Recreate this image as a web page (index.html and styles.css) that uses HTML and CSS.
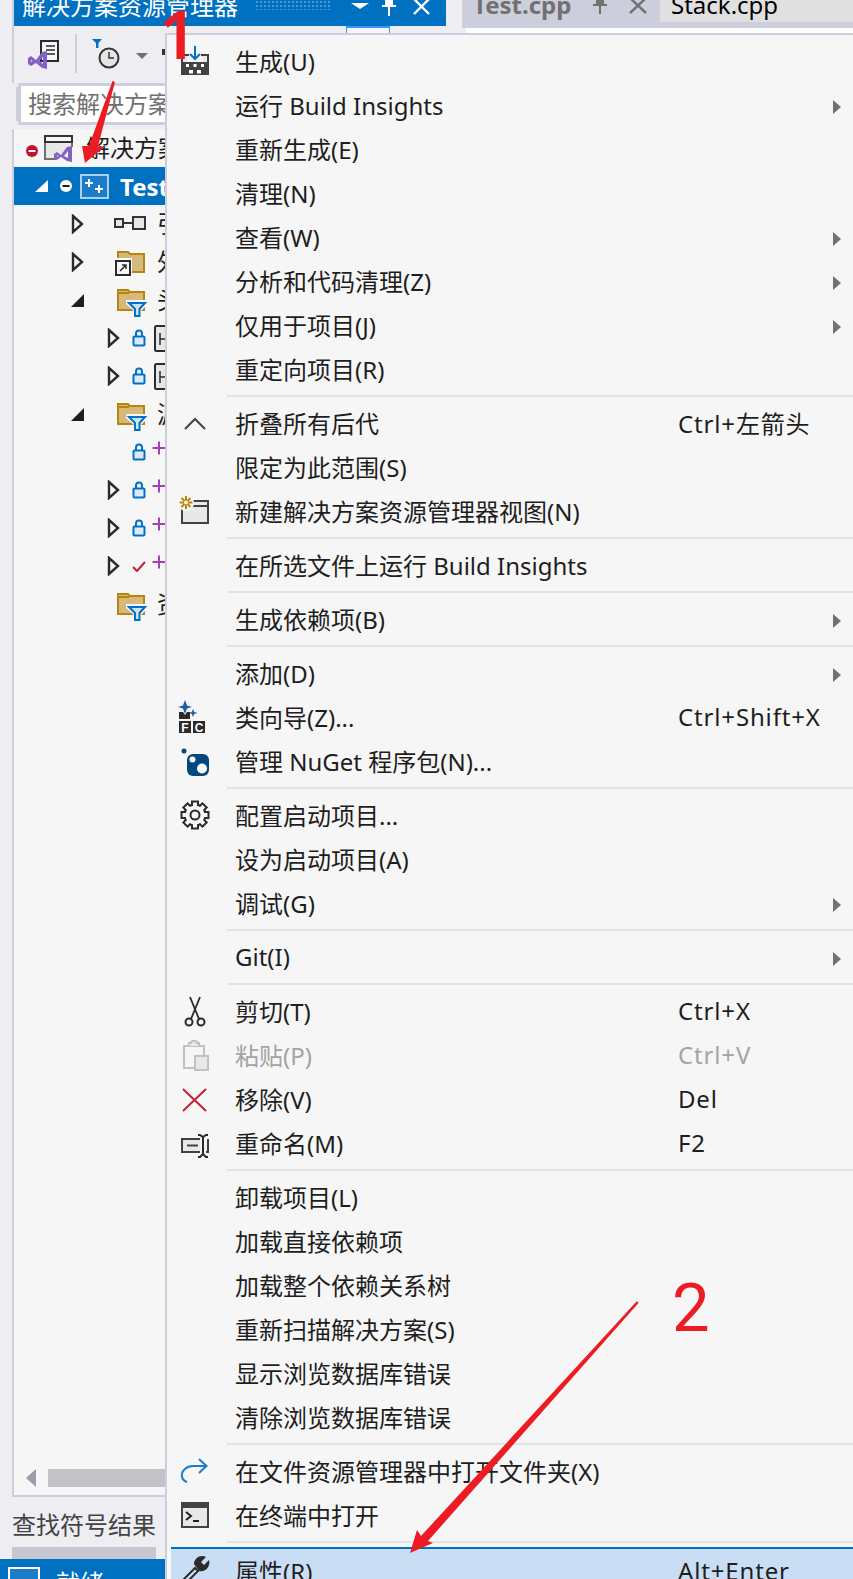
FILE: index.html
```html
<!DOCTYPE html>
<html lang="zh-CN">
<head>
<meta charset="utf-8">
<title>解决方案资源管理器</title>
<link rel="stylesheet" href="styles.css">
</head>
<body>
<svg class="defs" width="0" height="0" aria-hidden="true">
  <defs>
    <symbol id="a-open" viewBox="0 0 14 20"><path d="M2 2 L11 10 L2 18 Z" fill="none" stroke="#2b2b2b" stroke-width="2.4"/></symbol>
    <symbol id="a-full" viewBox="0 0 14 20"><path d="M13 4 V17 H0 Z" fill="#1e1e1e"/></symbol>
    <symbol id="lock" viewBox="0 0 14 18"><rect x="1.5" y="7.5" width="11" height="9" rx="1" fill="#dce9f6" stroke="#0072c6" stroke-width="2"/><path d="M4 7 V4.5 C4 0.5 10 0.5 10 4.5 V7" fill="none" stroke="#0072c6" stroke-width="2"/></symbol>
    <symbol id="ffilter" viewBox="0 0 34 36" overflow="visible"><path d="M4 8 H14 L16 10 H30 V28 H4 Z" fill="#d6b97c" stroke="#b8860b" stroke-width="2"/><path d="M4 11 H15" stroke="#b8860b" stroke-width="2"/><path d="M12 18 H34 V22 L27 29 V37 H20 V29 L12 22 Z" fill="#f6f6f6"/><path d="M15 21 H31 L25.500 27 V34 H21 V27 Z" fill="#cfe3f5" stroke="#0072c6" stroke-width="2"/></symbol>
    <symbol id="plus" viewBox="0 0 28 36"><path d="M9 7.500 V20.500 M2.500 14 H15.500" stroke="#a43fb5" stroke-width="2" fill="none"/></symbol>
    <symbol id="hfile" viewBox="0 0 28 36"><rect x="5" y="6" width="22" height="25" rx="1.500" fill="#e6e6e6" stroke="#2b2b2b" stroke-width="2"/><path d="M10 13 V25 M10 19 H16 M16 15 V23" stroke="#2b2b2b" stroke-width="1.500" fill="none"/></symbol>
  </defs>
</svg>

<div class="page">
  <div class="main">
    <section class="explorer">
      <header class="title">
        <span class="title-text">解决方案资源管理器</span>
        <span class="grip"></span>
        <svg class="t-drop" width="18" height="6" viewBox="0 0 18 6"><path d="M0 0 H18 L9 6 Z" fill="#fff"/></svg>
        <svg class="t-pin" width="14" height="16" viewBox="0 0 14 16"><path d="M3 0 H11 V5 H14 V7 H8 V16 H6 V7 H0 V5 H3 Z" fill="#fff"/></svg>
        <svg class="t-x" width="17" height="15" viewBox="0 0 17 15"><path d="M1 -1 L16 14 M16 -1 L1 14" stroke="#fff" stroke-width="2.400"/></svg>
      </header>
      <div class="toolbar">
        <svg class="tb-doc" width="32" height="32" viewBox="0 0 32 32"><rect x="13" y="2" width="17" height="20" fill="#f6f6f6" stroke="#2b2b2b" stroke-width="2"/><path d="M18 7 H27 M18 11 H27 M18 15 H27" stroke="#2b2b2b" stroke-width="1.500"/><path d="M0 19 L3 17 L8 21 L14 13 L19 12 V30 L14 29 L8 24 L3 27 L0 25 Z M3 21 V23 L4.500 22 Z M15 18 L11.500 22 L15 25 Z" fill="#8661c5" fill-rule="evenodd"/></svg>
        <span class="tb-sep"></span>
        <svg class="tb-clock" width="28" height="30" viewBox="0 0 28 30"><circle cx="17" cy="19" r="9.500" fill="#e4e4e4" stroke="#333" stroke-width="2"/><path d="M17 13 V19 H22" fill="none" stroke="#333" stroke-width="1.500"/><path d="M0 0 H10 L6.500 4 V9 H4 V4 Z" fill="#0072c6"/></svg>
        <span class="tb-caret"></span>
        <span class="tb-bit"></span>
        <span class="tb-hot"></span>
      </div>
      <div class="search">搜索解决方案资源管理器(Ctrl+;)</div>
      <div class="tree-wrap">
        <ul class="tree">
          <li class="row lv0">
            <span class="state"><svg width="12" height="12" viewBox="0 0 12 12"><circle cx="6" cy="6" r="6" fill="#c50f2e"/><rect x="2.500" y="5" width="7" height="2" fill="#fff"/></svg></span>
            <span class="icon"><svg width="30" height="30" viewBox="0 0 30 30"><path d="M12 26 H1 V3 H28 V14" fill="#e8e8e8" stroke="#717171" stroke-width="2"/><path d="M1 3 H28 V9 H1 Z" fill="#f6f6f6" stroke="#333" stroke-width="2"/><path d="M10 21 L13 19 L17 22 L23 14 L28 13 V29 L23 28 L17 24 L13 27 L10 25 Z M13 22 V24 L14.500 23 Z M24 18 L20 23 L24 25 Z" fill="#8661c5" fill-rule="evenodd"/></svg></span>
            <span class="label">解决方案'Test'</span>
          </li>
          <li class="row lv1 selected">
            <span class="exp"><svg width="14" height="14" viewBox="0 0 14 14"><path d="M13 1 V13 H0 Z" fill="#fff"/></svg></span>
            <span class="state"><svg width="12" height="12" viewBox="0 0 12 12"><circle cx="6" cy="6" r="6" fill="#fff"/><rect x="2.500" y="5" width="7" height="2" fill="#1e1e1e"/></svg></span>
            <span class="icon"><svg width="29" height="25" viewBox="0 0 29 25"><rect x="1" y="1" width="27" height="23" fill="#1c7cc8" stroke="#a9d2f0" stroke-width="2"/><path d="M9 5 V13 M5 9 H13 M19 11 V19 M15 15 H23" stroke="#fff" stroke-width="2"/></svg></span>
            <span class="label strong">Test</span>
          </li>
          <li class="row lv2">
            <span class="exp"><svg width="14" height="20"><use href="#a-open"/></svg></span>
            <span class="state"></span>
            <span class="icon"><svg width="34" height="16" viewBox="0 0 34 16"><rect x="1" y="3" width="8" height="8" fill="#e6e6e6" stroke="#333" stroke-width="2"/><path d="M9 7 H19" stroke="#333" stroke-width="2"/><rect x="19" y="1" width="12" height="12" fill="#e6e6e6" stroke="#333" stroke-width="2"/></svg></span>
            <span class="label">引用</span>
          </li>
          <li class="row lv2">
            <span class="exp"><svg width="14" height="20"><use href="#a-open"/></svg></span>
            <span class="state"></span>
            <span class="icon"><svg width="34" height="36" viewBox="0 0 34 36"><path d="M4 8 H14 L16 10 H30 V28 H4 Z" fill="#d6b97c" stroke="#b8860b" stroke-width="2"/><rect x="0" y="14" width="18" height="20" fill="#fff"/><rect x="2" y="17" width="14" height="14" fill="#f6f6f6" stroke="#2b2b2b" stroke-width="2"/><path d="M6 27 L12 21 M8 21 H12 V25" fill="none" stroke="#2b2b2b" stroke-width="1.500"/></svg></span>
            <span class="label">外部依赖项</span>
          </li>
          <li class="row lv2">
            <span class="exp"><svg width="14" height="20"><use href="#a-full"/></svg></span>
            <span class="state"></span>
            <span class="icon"><svg width="34" height="36"><use href="#ffilter"/></svg></span>
            <span class="label">头文件</span>
          </li>
          <li class="row lv3">
            <span class="exp"><svg width="14" height="20"><use href="#a-open"/></svg></span>
            <span class="state"><svg width="14" height="18"><use href="#lock"/></svg></span>
            <span class="icon"><svg width="28" height="36"><use href="#hfile"/></svg></span>
            <span class="label"></span>
          </li>
          <li class="row lv3">
            <span class="exp"><svg width="14" height="20"><use href="#a-open"/></svg></span>
            <span class="state"><svg width="14" height="18"><use href="#lock"/></svg></span>
            <span class="icon"><svg width="28" height="36"><use href="#hfile"/></svg></span>
            <span class="label"></span>
          </li>
          <li class="row lv2">
            <span class="exp"><svg width="14" height="20"><use href="#a-full"/></svg></span>
            <span class="state"></span>
            <span class="icon"><svg width="34" height="36"><use href="#ffilter"/></svg></span>
            <span class="label">源文件</span>
          </li>
          <li class="row lv3">
            <span class="exp"></span>
            <span class="state"><svg width="14" height="18"><use href="#lock"/></svg></span>
            <span class="icon"><svg width="28" height="36"><use href="#plus"/></svg></span>
            <span class="label"></span>
          </li>
          <li class="row lv3">
            <span class="exp"><svg width="14" height="20"><use href="#a-open"/></svg></span>
            <span class="state"><svg width="14" height="18"><use href="#lock"/></svg></span>
            <span class="icon"><svg width="28" height="36"><use href="#plus"/></svg></span>
            <span class="label"></span>
          </li>
          <li class="row lv3">
            <span class="exp"><svg width="14" height="20"><use href="#a-open"/></svg></span>
            <span class="state"><svg width="14" height="18"><use href="#lock"/></svg></span>
            <span class="icon"><svg width="28" height="36"><use href="#plus"/></svg></span>
            <span class="label"></span>
          </li>
          <li class="row lv3">
            <span class="exp"><svg width="14" height="20"><use href="#a-open"/></svg></span>
            <span class="state"><svg width="14" height="12" viewBox="0 0 14 12"><path d="M1 7 L5 11 L13 2" fill="none" stroke="#c5203a" stroke-width="2"/></svg></span>
            <span class="icon"><svg width="28" height="36"><use href="#plus"/></svg></span>
            <span class="label"></span>
          </li>
          <li class="row lv2">
            <span class="exp"></span>
            <span class="state"></span>
            <span class="icon"><svg width="34" height="36"><use href="#ffilter"/></svg></span>
            <span class="label">资源文件</span>
          </li>
        </ul>
        <div class="hscroll">
          <span class="hs-left"></span>
          <span class="hs-thumb"></span>
        </div>
      </div>
      <div class="bottom-tab">查找符号结果</div>
      <div class="tab-strip"></div>
    </section>
    <section class="docs">
      <div class="tabs">
        <div class="tab active-off">
          <span class="tab-name bold">Test.cpp</span>
          <svg class="tab-pin" width="14" height="14" viewBox="0 0 14 14"><path d="M3 -2 H11 V4 H14 V6 H8 V14 H6 V6 H0 V4 H3 Z" fill="#717171"/></svg>
          <svg class="tab-x" width="18" height="14" viewBox="0 0 18 14"><path d="M1 -2 L17 13 M17 -2 L1 13" stroke="#717171" stroke-width="2.400"/></svg>
        </div>
        <div class="tab active"><span class="tab-name">Stack.cpp</span></div>
      </div>
      <div class="tabline"></div>
    </section>
  </div>
  <footer class="status">
    <span class="st-box"></span>
    <span class="st-text">就绪</span>
  </footer>

  <nav class="menu">
    <div class="mi"><span class="mi-ic"><svg width="32" height="36" viewBox="0 0 32 36"><path d="M3 28 V10 H10 M29 28 V10 H22" fill="#e8e8e8" stroke="#424242" stroke-width="2"/><rect x="2" y="17" width="28" height="13" fill="#424242"/><path d="M7 19 h3 v3 h-3 z M14.500 19 h3 v3 h-3 z M22 19 h3 v3 h-3 z M10 25 h4 v3.500 h-4 z M18 25 h4 v3.500 h-4 z" fill="#fff"/><path d="M16 1 V14 M11 9 L16 14 L21 9" fill="none" stroke="#0072c6" stroke-width="2"/></svg></span><span class="mi-t">生成(U)</span></div>
    <div class="mi"><span class="mi-ic"></span><span class="mi-t">运行 Build Insights</span><span class="mi-k"></span><span class="sub"></span></div>
    <div class="mi"><span class="mi-ic"></span><span class="mi-t">重新生成(E)</span></div>
    <div class="mi"><span class="mi-ic"></span><span class="mi-t">清理(N)</span></div>
    <div class="mi"><span class="mi-ic"></span><span class="mi-t">查看(W)</span><span class="mi-k"></span><span class="sub"></span></div>
    <div class="mi"><span class="mi-ic"></span><span class="mi-t">分析和代码清理(Z)</span><span class="mi-k"></span><span class="sub"></span></div>
    <div class="mi"><span class="mi-ic"></span><span class="mi-t">仅用于项目(J)</span><span class="mi-k"></span><span class="sub"></span></div>
    <div class="mi"><span class="mi-ic"></span><span class="mi-t">重定向项目(R)</span></div>
    <div class="sep"></div>
    <div class="mi"><span class="mi-ic"><svg width="32" height="36" viewBox="0 0 32 36"><path d="M6 22 L16 12 L26 22" fill="none" stroke="#424242" stroke-width="2"/></svg></span><span class="mi-t">折叠所有后代</span><span class="mi-k">Ctrl+左箭头</span></div>
    <div class="mi"><span class="mi-ic"></span><span class="mi-t">限定为此范围(S)</span></div>
    <div class="mi"><span class="mi-ic"><svg width="32" height="36" viewBox="0 0 32 36"><rect x="3" y="6" width="26" height="22" fill="#e8e8e8" stroke="#424242" stroke-width="2"/><path d="M3 11 H29" stroke="#424242" stroke-width="2"/><circle cx="7" cy="8" r="8" fill="#f6f6f6"/><path d="M7 1 V14 M0.500 7.500 H13.500 M2.500 3 L11.500 12 M11.500 3 L2.500 12" stroke="#b8860b" stroke-width="2"/><circle cx="7" cy="7.500" r="2" fill="#f6f6f6"/></svg></span><span class="mi-t">新建解决方案资源管理器视图(N)</span></div>
    <div class="sep"></div>
    <div class="mi"><span class="mi-ic"></span><span class="mi-t">在所选文件上运行 Build Insights</span></div>
    <div class="sep"></div>
    <div class="mi"><span class="mi-ic"></span><span class="mi-t">生成依赖项(B)</span><span class="mi-k"></span><span class="sub"></span></div>
    <div class="sep"></div>
    <div class="mi"><span class="mi-ic"></span><span class="mi-t">添加(D)</span><span class="mi-k"></span><span class="sub"></span></div>
    <div class="mi"><span class="mi-ic"><svg width="32" height="36" viewBox="0 0 32 36"><path d="M6 -1 L8 4.500 L13 6 L8 7.500 L6 13 L4 7.500 L-1 6 L4 4.500 Z M14 8 L15.200 11 L18.500 12 L15.200 13 L14 16 L12.800 13 L9.500 12 L12.800 11 Z" fill="#1e5fa8"/><path d="M0 11 H4 L6 14 L8 11 H11 V18 H0 Z" fill="#2b2b2b"/><rect x="0" y="20" width="12" height="12" fill="#2b2b2b"/><rect x="14" y="20" width="12" height="12" fill="#2b2b2b"/><text x="6" y="30.500" class="ic-letter">F</text><text x="20" y="30.500" class="ic-letter">C</text></svg></span><span class="mi-t">类向导(Z)...</span><span class="mi-k">Ctrl+Shift+X</span></div>
    <div class="mi"><span class="mi-ic"><svg width="32" height="36" viewBox="0 0 32 36"><circle cx="5" cy="6" r="2.500" fill="#004880"/><rect x="8" y="9" width="22" height="22" rx="6" fill="#004880"/><circle cx="13.500" cy="14.500" r="3" fill="#fff"/><circle cx="23" cy="23.500" r="5" fill="#fff"/></svg></span><span class="mi-t">管理 NuGet 程序包(N)...</span></div>
    <div class="sep"></div>
    <div class="mi"><span class="mi-ic"><svg width="32" height="36" viewBox="0 0 32 36"><g transform="translate(16 16)"><circle r="10.500" fill="#f6f6f6" stroke="#2b2b2b" stroke-width="2"/><g fill="#f6f6f6" stroke="#2b2b2b" stroke-width="2"><rect x="-3" y="-13.500" width="6" height="6"/><rect x="-3" y="-13.500" width="6" height="6" transform="rotate(45)"/><rect x="-3" y="-13.500" width="6" height="6" transform="rotate(90)"/><rect x="-3" y="-13.500" width="6" height="6" transform="rotate(135)"/><rect x="-3" y="-13.500" width="6" height="6" transform="rotate(180)"/><rect x="-3" y="-13.500" width="6" height="6" transform="rotate(225)"/><rect x="-3" y="-13.500" width="6" height="6" transform="rotate(270)"/><rect x="-3" y="-13.500" width="6" height="6" transform="rotate(315)"/></g><circle r="9.500" fill="#f6f6f6"/><circle r="4.500" fill="none" stroke="#2b2b2b" stroke-width="2"/></g></svg></span><span class="mi-t">配置启动项目...</span></div>
    <div class="mi"><span class="mi-ic"></span><span class="mi-t">设为启动项目(A)</span></div>
    <div class="mi"><span class="mi-ic"></span><span class="mi-t">调试(G)</span><span class="mi-k"></span><span class="sub"></span></div>
    <div class="sep"></div>
    <div class="mi"><span class="mi-ic"></span><span class="mi-t">Git(I)</span><span class="mi-k"></span><span class="sub"></span></div>
    <div class="sep"></div>
    <div class="mi"><span class="mi-ic"><svg width="32" height="36" viewBox="0 0 32 36"><circle cx="10" cy="27" r="3.500" fill="none" stroke="#2b2b2b" stroke-width="2"/><circle cx="22" cy="27" r="3.500" fill="none" stroke="#2b2b2b" stroke-width="2"/><path d="M12 24 L21 2 M20 24 L11 2" fill="none" stroke="#2b2b2b" stroke-width="1.800"/></svg></span><span class="mi-t">剪切(T)</span><span class="mi-k">Ctrl+X</span></div>
    <div class="mi disabled"><span class="mi-ic"><svg width="32" height="36" viewBox="0 0 32 36"><path d="M15 29 H5 V7 H25 V16" fill="none" stroke="#c2c2c2" stroke-width="2"/><path d="M10 7 V4 H12 C12 1 18 1 18 4 H20 V7" fill="#e8e8e8" stroke="#c2c2c2" stroke-width="2"/><rect x="16" y="17" width="13" height="14" fill="#e8e8e8" stroke="#c2c2c2" stroke-width="2"/></svg></span><span class="mi-t">粘贴(P)</span><span class="mi-k">Ctrl+V</span></div>
    <div class="mi"><span class="mi-ic"><svg width="32" height="36" viewBox="0 0 32 36"><path d="M4 6 L27 28 M27 6 L4 28" stroke="#c5203a" stroke-width="2"/></svg></span><span class="mi-t">移除(V)</span><span class="mi-k">Del</span></div>
    <div class="mi"><span class="mi-ic"><svg width="32" height="36" viewBox="0 0 32 36"><path d="M21 12 H3 V25 H21" fill="#e8e8e8" stroke="#424242" stroke-width="2"/><path d="M8 18.500 H19" stroke="#424242" stroke-width="2"/><path d="M29 12 V25 H27" fill="none" stroke="#424242" stroke-width="2"/><path d="M19 8 H21 L24 10 L27 8 H29 M24 10 V27 M19 30 H21 L24 27 L27 30 H29" fill="none" stroke="#2b2b2b" stroke-width="2"/></svg></span><span class="mi-t">重命名(M)</span><span class="mi-k">F2</span></div>
    <div class="sep"></div>
    <div class="mi"><span class="mi-ic"></span><span class="mi-t">卸载项目(L)</span></div>
    <div class="mi"><span class="mi-ic"></span><span class="mi-t">加载直接依赖项</span></div>
    <div class="mi"><span class="mi-ic"></span><span class="mi-t">加载整个依赖关系树</span></div>
    <div class="mi"><span class="mi-ic"></span><span class="mi-t">重新扫描解决方案(S)</span></div>
    <div class="mi"><span class="mi-ic"></span><span class="mi-t">显示浏览数据库错误</span></div>
    <div class="mi"><span class="mi-ic"></span><span class="mi-t">清除浏览数据库错误</span></div>
    <div class="sep"></div>
    <div class="mi"><span class="mi-ic"><svg width="32" height="36" viewBox="0 0 32 36"><path d="M8 27 C2 25 1 18 6 14 C8 12 10 11 14 11 H27 M20 4 L27.500 11 L20 18" fill="none" stroke="#1e7bc8" stroke-width="2"/></svg></span><span class="mi-t">在文件资源管理器中打开文件夹(X)</span></div>
    <div class="mi"><span class="mi-ic"><svg width="32" height="36" viewBox="0 0 32 36"><rect x="3" y="4" width="26" height="24" fill="#e8e8e8" stroke="#424242" stroke-width="2"/><rect x="3" y="4" width="26" height="5" fill="#424242"/><path d="M7 13 L12 17 L7 21 M14 22 H20" fill="none" stroke="#1e1e1e" stroke-width="2"/></svg></span><span class="mi-t">在终端中打开</span></div>
    <div class="sep sep-last"></div>
    <div class="mi hover"><span class="mi-ic"><svg width="32" height="36" viewBox="0 0 32 36"><path d="M2 30 L5 33 L19 19 L16 16 Z" fill="#c9def5" stroke="#2b2b2b" stroke-width="2"/><path d="M15 12 C15 6 22 2 27 5 L22 10 L25 13 L30 8 C32 14 26 21 20 19 Z" fill="#2b2b2b"/></svg></span><span class="mi-t">属性(R)</span><span class="mi-k">Alt+Enter</span></div>
  </nav>

  <svg class="arrows" width="853" height="1579" viewBox="0 0 853 1579" aria-hidden="true">
    <path d="M112.500 81 L115 82 L98 146 L104 147 L85 163 L82 146 L89 146 Z" fill="#ed1c24"/>
    <path d="M637 1301 L638.500 1303 L428 1541 L433 1543 L410 1553 L417 1530 L421 1536 Z" fill="#ed1c24"/>
  </svg>
  <span class="mark mark-one">1</span>
  <span class="mark mark-two">2</span>
</div>
</body>
</html>
```
FILE: styles.css
```css
* { box-sizing: border-box; }
html, body { margin: 0; padding: 0; }
body {
  width: 853px;
  height: 1579px;
  overflow: hidden;
  background: #eeeef2;
  color: #1e1e1e;
  font-family: "Noto Sans", "Noto Sans CJK SC", sans-serif;
  font-size: 24px;
}
.defs { position: absolute; }
.page {
  position: relative;
  width: 853px;
  height: 1579px;
  overflow: hidden;
  display: flex;
  flex-direction: column;
}
.main { display: flex; height: 1559px; flex: none; }

/* explorer pane */
.explorer {
  width: 446px;
  flex: none;
  padding-left: 12px;
  display: flex;
  flex-direction: column;
}
.title {
  height: 26px;
  flex: none;
  margin-left: 2px;
  background: #0070c0;
  color: #fff;
  display: flex;
  align-items: flex-start;
  padding-left: 8px;
  box-shadow: -2px 0 0 #cccedb;
}
.title-text { line-height: 12px; white-space: nowrap; }
.grip {
  width: 76px;
  height: 10px;
  margin-left: 17px;
  background-image: radial-gradient(#4d9bd6 1px, transparent 1.2px);
  background-size: 4px 4px;
}
.t-drop { margin: 3px 0 0 20px; }
.t-pin { margin: 0 0 0 13px; }
.t-x { margin: 0 0 0 17px; }
.toolbar {
  height: 57px;
  flex: none;
  border-left: 2px solid #cccedb;
  display: flex;
  align-items: center;
  padding-left: 14px;
  position: relative;
}
.tb-doc { margin-bottom: 0; }
.tb-sep { width: 2px; height: 39px; background: #cccedb; margin: 0 0 2px 15px; }
.tb-clock { margin: 0 0 2px 15px; }
.tb-caret {
  width: 0; height: 0;
  margin: 2px 0 0 16px;
  border-left: 6px solid transparent;
  border-right: 6px solid transparent;
  border-top: 6px solid #717171;
}
.tb-bit { width: 6px; height: 6px; margin: 0 0 6px 14px; background: #333; }
.tb-hot {
  width: 44px; height: 10px;
  margin: 0 0 47px 178px;
  border: 1px solid #3399ff;
  border-top-width: 2px;
  background: #f6f6f6;
}
.search {
  height: 42px;
  flex: none;
  margin-left: 6px;
  border: 3px solid #cccedb;
  background: #fff;
  color: #717171;
  padding-left: 7px;
  line-height: 36px;
  white-space: nowrap;
  overflow: hidden;
  box-shadow: -6px 0 0 -4px #cccedb;
}
.tree-wrap {
  flex: 1;
  margin-top: 4px;
  border-left: 2px solid #cccedb;
  border-bottom: 2px solid #cccedb;
  background: #f6f6f6;
  display: flex;
  flex-direction: column;
  min-height: 0;
}
.tree { list-style: none; margin: 0; padding: 0; flex: 1; }
.row {
  height: 38px;
  display: flex;
  align-items: center;
  white-space: nowrap;
}
.lv0 { padding-left: 7px; }
.lv1 { padding-left: 20px; }
.lv2 { padding-left: 56px; }
.lv3 { padding-left: 92px; }
.selected { background: #0070c0; color: #fff; }
.exp { width: 22px; flex: none; padding-left: 1px; display: flex; }
.lv1 .state { margin-left: -1px; }
.state { width: 22px; flex: none; display: flex; justify-content: center; }
.lv0 .state { padding-top: 5px; }
.icon { width: 43px; flex: none; display: flex; align-items: center; }
.lv0 .icon { padding-left: 1px; }
.lv1 .icon { padding-left: 3px; }
.label { white-space: nowrap; }
.lv0 .label, .lv2 .label { padding-bottom: 3px; }
.strong { font-weight: 700; }
.hscroll {
  height: 26px;
  flex: none;
  display: flex;
  align-items: flex-start;
  padding: 0 0 8px 12px;
}
.hs-left {
  width: 0; height: 0;
  border-top: 9px solid transparent;
  border-bottom: 9px solid transparent;
  border-right: 10px solid #9a9eab;
}
.hs-thumb { width: 380px; height: 18px; margin-left: 12px; background: #c2c3c9; }
.bottom-tab {
  height: 50px;
  flex: none;
  color: #444;
  line-height: 56px;
  white-space: nowrap;
}
.tab-strip { height: 12px; width: 144px; flex: none; background: #c6c7d1; }

/* document tabs */
.docs { flex: 1; min-width: 0; padding-left: 16px; }
.tabs { display: flex; height: 28px; background: #cccedb; }
.tab { display: flex; align-items: flex-start; }
.active-off { width: 198px; padding-left: 11px; }
.active { flex: 1; height: 22px; background: #e0e0e0; padding-left: 11px; }
.tab-name { line-height: 10px; color: #000; white-space: nowrap; }
.tab-name.bold { font-weight: 700; color: #717171; }
.tab-pin { margin-left: 22px; }
.tab-x { margin-left: 22px; }
.tabline { height: 5px; margin-left: 4px; background: #fff; }

/* status bar */
.status {
  height: 20px;
  flex: none;
  width: 165px;
  background: #0070c0;
  color: #fff;
  display: flex;
  align-items: flex-start;
  padding: 8px 0 0 8px;
  overflow: hidden;
}
.st-box {
  width: 32px; height: 24px;
  flex: none;
  border: 2px solid #fff;
  background: #1c7cc8;
}
.st-text { margin-left: 16px; line-height: 24px; margin-top: 4px; }

/* context menu */
.menu {
  position: absolute;
  left: 165px;
  top: 33px;
  right: 0;
  bottom: 0;
  background: #f6f6f6;
  border-top: 2px solid #cccedb;
  border-left: 2px solid #cccedb;
  padding-top: 6px;
  overflow: hidden;
}
.mi {
  height: 44px;
  display: flex;
  align-items: center;
  white-space: nowrap;
}
.mi-ic { width: 32px; height: 36px; flex: none; margin-left: 12px; }
.mi-ic svg { display: block; overflow: visible; }
.mi-t { width: 443px; flex: none; margin-left: 24px; padding-bottom: 5px; }
.mi-k { width: 155px; flex: none; padding-bottom: 5px; letter-spacing: 0.85px; }
.sub {
  width: 0; height: 0;
  border-left: 8px solid #717171;
  border-top: 7px solid transparent;
  border-bottom: 7px solid transparent;
}
.sep { height: 2px; margin: 2px 0 6px 60px; background: #e0e3e8; }
.sep-last { margin-bottom: 4px; }
.disabled { color: #a2a4a5; }
.hover {
  margin-left: 4px;
  background: #c9def5;
  border-top: 2px solid #0070c0;
}
.hover .mi-ic { margin-left: 8px; }
.hover .mi-t, .hover .mi-k { padding-bottom: 0; }
.ic-letter { font: 700 12px "Liberation Sans", sans-serif; fill: #fff; text-anchor: middle; }

/* red annotations */
.arrows { position: absolute; left: 0; top: 0; pointer-events: none; }
.mark {
  position: absolute;
  color: #ed1c24;
  line-height: 1;
}
.mark-one {
  left: 159px;
  top: 0;
  font: 600 66px/66px "Noto Sans", sans-serif;
}
.mark-two {
  left: 672px;
  top: 1275px;
  font: 400 67px/67px "Roboto", sans-serif;
}
```
